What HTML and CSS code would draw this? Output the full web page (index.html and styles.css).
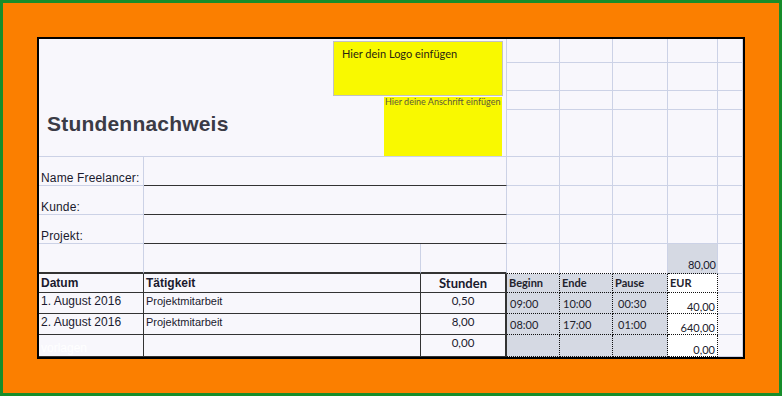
FILE: index.html
```html
<!DOCTYPE html>
<html lang="de">
<head>
<meta charset="utf-8">
<title>Stundennachweis</title>
<link rel="stylesheet" href="styles.css">
</head>
<body>
<div class="page">
  <div class="sheet">
    <!-- rows 1-4 -->
    <div class="cell head">
      <div class="title">Stundennachweis</div>
      <div class="boxes">
        <div class="logo">Hier dein Logo einfügen</div>
        <div class="addr">Hier deine Anschrift einfügen</div>
      </div>
    </div>
    <div class="cell"></div><div class="cell"></div><div class="cell"></div><div class="cell"></div><div class="cell"></div>
    <div class="cell"></div><div class="cell"></div><div class="cell"></div><div class="cell"></div><div class="cell"></div>
    <div class="cell"></div><div class="cell"></div><div class="cell"></div><div class="cell"></div><div class="cell"></div>
    <div class="cell"></div><div class="cell"></div><div class="cell"></div><div class="cell"></div><div class="cell"></div>

    <!-- rows 5-7 -->
    <div class="cell lab">Name Freelancer:</div><div class="cell line"></div>
    <div class="cell"></div><div class="cell"></div><div class="cell"></div><div class="cell"></div><div class="cell"></div>
    <div class="cell lab">Kunde:</div><div class="cell line"></div>
    <div class="cell"></div><div class="cell"></div><div class="cell"></div><div class="cell"></div><div class="cell"></div>
    <div class="cell lab">Projekt:</div><div class="cell line"></div>
    <div class="cell"></div><div class="cell"></div><div class="cell"></div><div class="cell"></div><div class="cell"></div>

    <!-- row 8 -->
    <div class="cell thick-b"></div><div class="cell thick-b"></div><div class="cell thick-b"></div>
    <div class="cell dot-b"></div><div class="cell dot-b"></div><div class="cell dot-b"></div>
    <div class="cell dot-b fill num total">80,00</div>
    <div class="cell"></div>

    <!-- row 9 header -->
    <div class="cell t th">Datum</div>
    <div class="cell t th">Tätigkeit</div>
    <div class="cell t t-last th-num">Stunden</div>
    <div class="cell d fill dh">Beginn</div>
    <div class="cell d fill dh">Ende</div>
    <div class="cell d fill dh">Pause</div>
    <div class="cell d white dh">EUR</div>
    <div class="cell"></div>

    <!-- row 10 -->
    <div class="cell t td">1. August 2016</div>
    <div class="cell t td small">Projektmitarbeit</div>
    <div class="cell t t-last td-num">0,50</div>
    <div class="cell d fill dt">09:00</div>
    <div class="cell d fill dt">10:00</div>
    <div class="cell d fill dt pause">00:30</div>
    <div class="cell d white eur">40,00</div>
    <div class="cell"></div>

    <!-- row 11 -->
    <div class="cell t td">2. August 2016</div>
    <div class="cell t td small">Projektmitarbeit</div>
    <div class="cell t t-last td-num">8,00</div>
    <div class="cell d fill dt">08:00</div>
    <div class="cell d fill dt">17:00</div>
    <div class="cell d fill dt pause">01:00</div>
    <div class="cell d white eur">640,00</div>
    <div class="cell"></div>

    <!-- row 12 -->
    <div class="cell t td mark">vorlagen</div>
    <div class="cell t td small"></div>
    <div class="cell t t-last td-num">0,00</div>
    <div class="cell d fill dt"></div>
    <div class="cell d fill dt"></div>
    <div class="cell d fill dt"></div>
    <div class="cell d white eur">0,00</div>
    <div class="cell"></div>
  </div>
</div>
</body>
</html>
```

FILE: styles.css
```css
html, body {
  margin: 0;
  padding: 0;
}

body {
  font-family: "Liberation Sans", Arial, sans-serif;
  color: #1a1a2e;
}

.page {
  width: 708px;
  border: 3px solid #178d2a;
  background: #fb7f00;
  padding: 34px;
}

.sheet {
  display: grid;
  grid-template-columns: 105px 277px 86px 53px 53px 55px 50px 25px;
  grid-template-rows: 24px 28px 19px 47px 29px 29px 29px 30px 19px 21px 21px 22px;
  border: 2px solid #000;
  background: #f8f7fc;
}

.cell {
  box-sizing: border-box;
  border-right: 1px solid #ccd2e6;
  border-bottom: 1px solid #ccd2e6;
  display: flex;
  min-width: 0;
  overflow: hidden;
  white-space: nowrap;
  font-size: 12px;
  line-height: 14px;
}

/* merged header area */
.head {
  grid-column: span 3;
  grid-row: span 4;
  overflow: visible;
}

.title {
  align-self: flex-end;
  padding: 0 0 20px 8px;
  font-size: 21px;
  line-height: 24px;
  font-weight: bold;
  color: #3b3b46;
  letter-spacing: 0.2px;
}

.boxes {
  margin-left: auto;
  display: flex;
  flex-direction: column;
  align-items: flex-end;
}

.logo {
  box-sizing: border-box;
  width: 170px;
  height: 55px;
  margin: 2px 3px 0 0;
  padding: 5px 0 0 8px;
  background: #f9f900;
  border: 1px solid #c2c2c2;
  font-family: Lato, "Liberation Sans", sans-serif;
  font-size: 11px;
  line-height: 13px;
  color: #2a2410;
}

.addr {
  box-sizing: border-box;
  width: 118px;
  flex: 1;
  margin: 1px 4px 0 0;
  padding: 0 0 0 1px;
  background: #f9f900;
  font-family: Lato, "Liberation Sans", sans-serif;
  font-size: 9px;
  line-height: 10px;
  color: #5e5a38;
}

/* label rows */
.lab {
  align-items: flex-end;
  padding-left: 2px;
  letter-spacing: 0.15px;
}

.line {
  grid-column: span 2;
  border-bottom: 1px solid #333;
}

.thick-b {
  border-bottom: 2px solid #333;
}

.dot-b {
  border-bottom: 1px dotted #111;
}

.fill {
  background: #d5d9e3;
}

.white {
  background: #ffffff;
}

.num {
  font-family: Lato, "Liberation Sans", sans-serif;
  font-size: 11px;
  line-height: 13px;
}

.total {
  justify-content: flex-end;
  align-items: flex-end;
  padding: 0 1px 2px 0;
}

/* left table */
.t {
  border-right: 1px solid #333;
  border-bottom: 1px solid #333;
}

.t-last {
  border-right: 2px solid #333;
}

.th {
  font-weight: bold;
  align-items: flex-end;
  padding: 0 0 2px 2px;
}

.th-num {
  font-family: Lato, "Liberation Sans", sans-serif;
  font-weight: bold;
  font-size: 13px;
  line-height: 14px;
  justify-content: center;
  align-items: flex-end;
  padding-bottom: 2px;
}

.td {
  align-items: flex-start;
  padding: 1px 0 0 2px;
}

.small {
  font-size: 11px;
}

.td-num {
  font-family: Lato, "Liberation Sans", sans-serif;
  font-size: 11.5px;
  line-height: 13px;
  justify-content: center;
  align-items: flex-start;
  padding-top: 1px;
}

.mark {
  color: #ffffff;
  align-items: flex-end;
  padding-bottom: 1px;
}

/* right dotted table */
.d {
  border-right: 1px dotted #111;
  border-bottom: 1px dotted #111;
  font-family: Lato, "Liberation Sans", sans-serif;
  font-size: 11px;
  line-height: 13px;
  color: #22222c;
}

.dh {
  font-weight: bold;
  align-items: flex-end;
  padding: 0 0 3px 2px;
}

.dt {
  align-items: flex-start;
  padding: 4px 0 0 3px;
}

.pause {
  padding-left: 5px;
}

.eur {
  justify-content: flex-end;
  align-items: flex-end;
  padding-right: 2px;
}
```
